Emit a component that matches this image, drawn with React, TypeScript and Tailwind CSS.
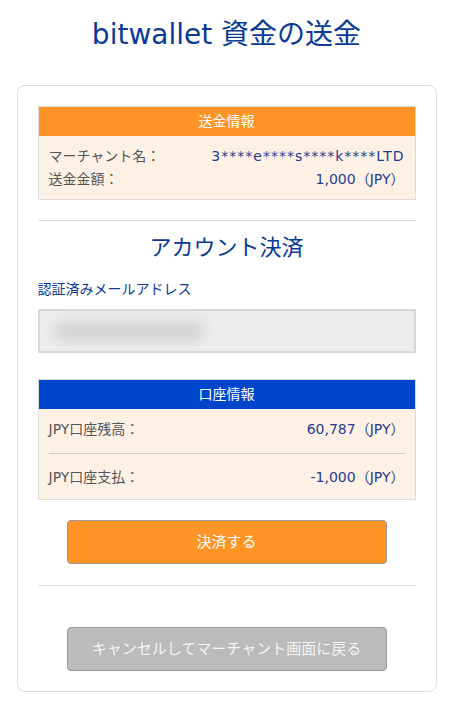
const font = "font-['DejaVu_Sans','Noto_Sans_CJK_JP',sans-serif]";

const InfoRow = ({
  label,
  value,
  wide = false,
}: {
  label: string;
  value: string;
  wide?: boolean;
}) => (
  <div className="flex items-center justify-between text-[14px] leading-[23px]">
    <span className="text-[#555]">{label}</span>
    <span className={wide ? "text-[#1e3d8f] tracking-[1px]" : "text-[#1e3d8f]"}>{value}</span>
  </div>
);

const App = () => {
  return (
    <div className={`w-[453px] min-h-[706px] bg-white ${font}`}>
      <h1 className="pt-[15px] text-center text-[28px] leading-[40px] text-[#0b3a98]">
        bitwallet 資金の送金
      </h1>
      <div className="mx-auto mt-[30px] w-[420px] rounded-[8px] border border-[#dcdcdc] px-5 pt-5 pb-5">
        <div className="border border-[#dcdcdc]">
          <div className="bg-[#ff9326] text-center text-[14px] leading-[29px] text-white">
            送金情報
          </div>
          <div className="bg-[#fdf1e6] px-[10px] pt-[9px] pb-[8px]">
            <InfoRow label="マーチャント名：" value="3****e****s****k****LTD" wide />
            <InfoRow label="送金金額：" value="1,000（JPY）" />
          </div>
        </div>

        <div className="mt-5 border-t border-[#dcdcdc]" />

        <h2 className="mt-[12px] text-center text-[22px] leading-[30px] text-[#0b3a98]">
          アカウント決済
        </h2>
        <div className="mt-[16px] text-[14px] leading-[20px] text-[#0b3a98]">
          認証済みメールアドレス
        </div>
        <div className="mt-[10px] flex h-[44px] items-center overflow-hidden border-2 border-[#d9d9d9] bg-[#ececec] px-[14px]">
          <div className="h-[18px] w-[150px] rounded-full bg-[#d2d2d2] blur-[6px]" />
        </div>

        <div className="mt-[26px] border border-[#dcdcdc]">
          <div className="bg-[#0046cc] text-center text-[14px] leading-[29px] text-white">
            口座情報
          </div>
          <div className="bg-[#fdf1e6] px-[10px]">
            <div className="pt-[9px] pb-[12px]">
              <InfoRow label="JPY口座残高：" value="60,787（JPY）" />
            </div>
            <div className="border-t border-[#ccc]" />
            <div className="pt-[12px] pb-[10px]">
              <InfoRow label="JPY口座支払：" value="-1,000（JPY）" />
            </div>
          </div>
        </div>

        <button
          type="button"
          className="mx-auto mt-[20px] block h-[44px] w-[320px] rounded-[4px] border border-[#999] bg-[#ff9326] text-[15px] text-white"
        >
          決済する
        </button>

        <div className="mt-[21px] border-t border-[#dcdcdc]" />

        <button
          type="button"
          className="mx-auto mt-[41px] block h-[44px] w-[320px] rounded-[4px] border border-[#999] bg-[#bbbbbb] text-[15px] text-[#f4f4f4]"
        >
          キャンセルしてマーチャント画面に戻る
        </button>
      </div>
    </div>
  );
};

export default App;
